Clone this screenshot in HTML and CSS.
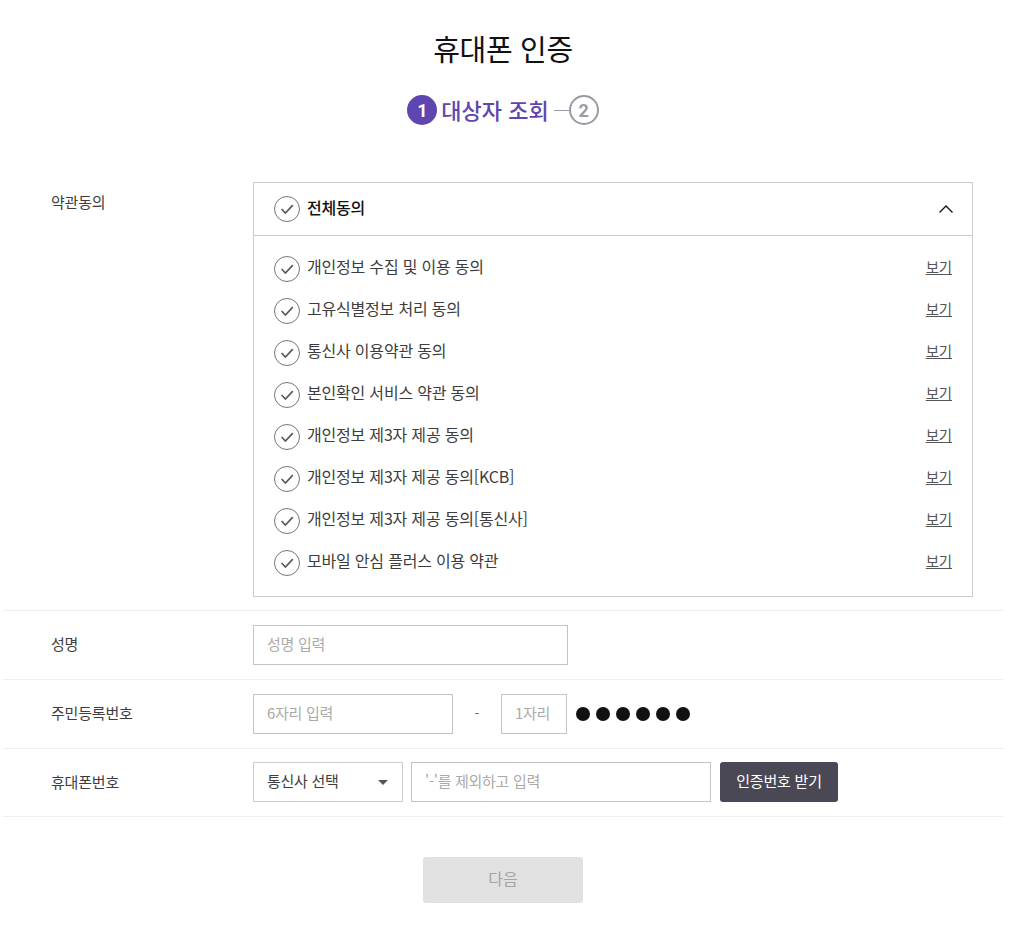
FILE: index.html
```html
<!DOCTYPE html>
<html lang="ko">
<head>
<meta charset="utf-8">
<title>휴대폰 인증</title>
<link rel="stylesheet" href="styles.css">
</head>
<body>
<svg class="defs" width="0" height="0" aria-hidden="true">
  <symbol id="chk" viewBox="0 0 26 26">
    <circle cx="13" cy="13" r="12.5" fill="none" stroke="#757575" stroke-width="1"/>
    <path d="M7.6 13l3.8 4 7.4-7.8" fill="none" stroke="#5a5a5a" stroke-width="1.7"/>
  </symbol>
</svg>
<main class="page">
  <h1 class="title">휴대폰 인증</h1>
  <div class="steps">
    <span class="step-on">1</span>
    <span class="step-name">대상자 조회</span>
    <span class="step-line"></span>
    <span class="step-off">2</span>
  </div>
  <section class="form">
    <div class="row row-terms">
      <div class="label label-terms">약관동의</div>
      <div class="terms">
        <div class="terms-head">
          <svg class="chk"><use href="#chk"/></svg>
          <span class="terms-all">전체동의</span>
          <svg class="caret-up" width="14" height="8" viewBox="0 0 14 8"><path d="M.5 7.5L7 1l6.5 6.5" fill="none" stroke="#111" stroke-width="1.3"/></svg>
        </div>
        <ul class="terms-list">
          <li class="term"><svg class="chk"><use href="#chk"/></svg><span class="term-text">개인정보 수집 및 이용 동의</span><a class="term-view">보기</a></li>
          <li class="term"><svg class="chk"><use href="#chk"/></svg><span class="term-text">고유식별정보 처리 동의</span><a class="term-view">보기</a></li>
          <li class="term"><svg class="chk"><use href="#chk"/></svg><span class="term-text">통신사 이용약관 동의</span><a class="term-view">보기</a></li>
          <li class="term"><svg class="chk"><use href="#chk"/></svg><span class="term-text">본인확인 서비스 약관 동의</span><a class="term-view">보기</a></li>
          <li class="term"><svg class="chk"><use href="#chk"/></svg><span class="term-text">개인정보 제3자 제공 동의</span><a class="term-view">보기</a></li>
          <li class="term"><svg class="chk"><use href="#chk"/></svg><span class="term-text">개인정보 제3자 제공 동의[KCB]</span><a class="term-view">보기</a></li>
          <li class="term"><svg class="chk"><use href="#chk"/></svg><span class="term-text">개인정보 제3자 제공 동의[통신사]</span><a class="term-view">보기</a></li>
          <li class="term"><svg class="chk"><use href="#chk"/></svg><span class="term-text">모바일 안심 플러스 이용 약관</span><a class="term-view">보기</a></li>
        </ul>
      </div>
    </div>
    <div class="row">
      <div class="label">성명</div>
      <div class="field w-name">성명 입력</div>
    </div>
    <div class="row">
      <div class="label">주민등록번호</div>
      <div class="field w-six">6자리 입력</div>
      <span class="dash">-</span>
      <div class="field w-one">1자리</div>
      <div class="dots"><i></i><i></i><i></i><i></i><i></i><i></i></div>
    </div>
    <div class="row row-last">
      <div class="label label-last">휴대폰번호</div>
      <div class="select">통신사 선택<span class="select-arrow"></span></div>
      <div class="field w-phone">'-'를 제외하고 입력</div>
      <button class="btn-code" type="button">인증번호 받기</button>
    </div>
  </section>
  <div class="actions"><button class="btn-next" type="button">다음</button></div>
</main>
</body>
</html>
```
FILE: styles.css
```css
* { box-sizing: border-box; }
html, body { margin: 0; padding: 0; background: #fff; }
body {
  font-family: "Noto Sans CJK KR", "Noto Sans", sans-serif;
  color: #3d3d3d;
  font-size: 15px;
}
.defs { position: absolute; }
.page { width: 1000px; margin-left: 3px; padding-top: 27px; }
.title {
  margin: 0;
  font-size: 29px;
  line-height: 43px;
  font-weight: 400;
  text-align: center;
  color: #111;
  letter-spacing: -0.3px;
}
.steps {
  display: flex;
  align-items: center;
  justify-content: center;
  margin-top: 25px;
  height: 30px;
}
.step-on, .step-off {
  width: 30px;
  height: 30px;
  border-radius: 50%;
  display: flex;
  align-items: center;
  justify-content: center;
  font-family: Roboto, sans-serif;
  font-weight: 700;
  font-size: 18px;
}
.step-on { background: #5f45b0; color: #fff; }
.step-off { border: 2px solid #9a9aa5; color: #9a9aa5; }
.step-name {
  color: #5f45b0;
  font-size: 22px;
  font-weight: 500;
  margin-left: 4px;
  padding-bottom: 2px;
}
.step-line { width: 15px; height: 1px; background: #9a9aa5; margin-left: 5px; }
.form { margin-top: 57px; }
.row {
  display: flex;
  align-items: center;
  min-height: 69px;
  border-bottom: 1px solid #eee;
}
.row-terms { align-items: flex-start; min-height: 0; padding-bottom: 13px; }
.row-last { min-height: 68px; padding-bottom: 1px; }
.label { width: 250px; padding-left: 48px; flex: none; font-size: 15px; letter-spacing: -0.2px; padding-bottom: 4px; }
.label-terms { padding-top: 9px; }
.label-last { padding-bottom: 2px; }
.terms { width: 720px; border: 1px solid #ccc; }
.terms-head {
  display: flex;
  align-items: center;
  height: 53px;
  padding: 0 20px;
  border-bottom: 1px solid #ccc;
}
.chk { width: 26px; height: 26px; flex: none; }
.terms-all { margin-left: 7px; padding-bottom: 4px; font-size: 16px; font-weight: 500; color: #111; letter-spacing: -0.2px; }
.caret-up { margin-left: auto; margin-right: -1px; }
.terms-list { list-style: none; margin: 0; padding: 12px 20px 12px; }
.term { display: flex; align-items: center; height: 42px; }
.term-text { margin-left: 7px; padding-bottom: 6px; font-size: 16px; letter-spacing: -0.2px; }
.term-view { margin-left: auto; margin-bottom: 6px; font-size: 14.5px; text-decoration: underline; color: #555; letter-spacing: -0.2px; }
.field {
  height: 40px;
  border: 1px solid #c4c4c4;
  display: flex;
  align-items: center;
  padding-left: 13px;
  padding-bottom: 4px;
  color: #aaa;
  font-size: 15px;
  flex: none;
  letter-spacing: -0.3px;
}
.w-name { width: 315px; }
.w-six { width: 200px; }
.w-one { width: 66px; }
.w-phone { width: 300px; margin-left: 8px; }
.dash { width: 48px; text-align: center; color: #666; font-size: 14px; padding-bottom: 2px; }
.dots { display: flex; gap: 6px; margin-left: 9px; }
.dots i { width: 14px; height: 14px; border-radius: 50%; background: #111; }
.select {
  width: 150px;
  height: 40px;
  border: 1px solid #ccc;
  display: flex;
  align-items: center;
  padding-left: 13px;
  padding-bottom: 4px;
  font-size: 15px;
  color: #3d3d3d;
  flex: none;
  letter-spacing: -0.3px;
}
.select-arrow {
  margin-left: auto;
  margin-right: 14px;
  margin-top: 4px;
  width: 0;
  height: 0;
  border-left: 5px solid transparent;
  border-right: 5px solid transparent;
  border-top: 5px solid #555;
}
.btn-code {
  width: 118px;
  height: 40px;
  margin-left: 9px;
  padding: 0 0 4px;
  border: 0;
  border-radius: 3px;
  background: #4a4854;
  color: #fff;
  font: inherit;
  font-size: 15px;
  letter-spacing: -0.2px;
}
.actions { display: flex; justify-content: center; margin-top: 40px; }
.btn-next {
  width: 160px;
  height: 46px;
  padding: 0 0 4px;
  border: 0;
  border-radius: 3px;
  background: #e1e1e1;
  color: #a5a5a5;
  font: inherit;
  font-size: 16px;
}
```
